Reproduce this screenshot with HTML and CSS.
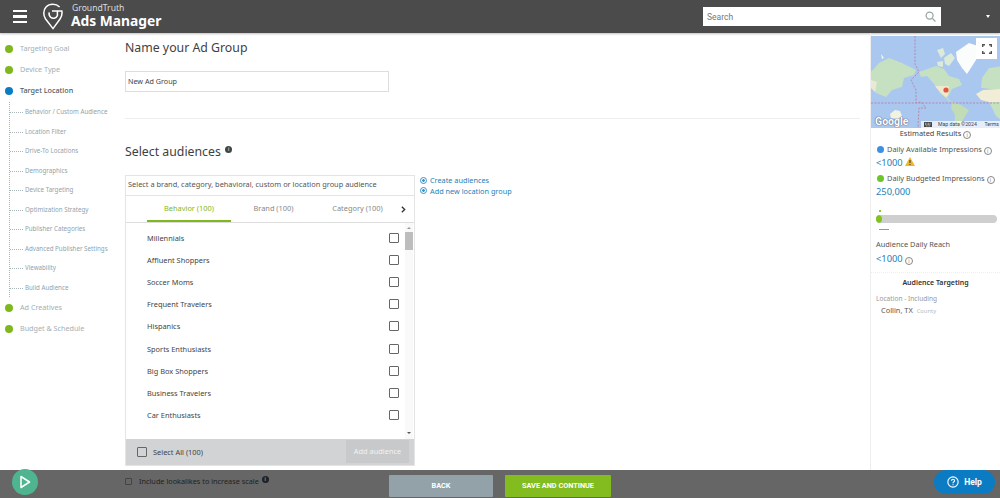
FILE: index.html
```html
<!doctype html>
<html lang="en">
  <head>
    <meta charset="UTF-8" />
    <title>Ads Manager</title>
    <link rel="stylesheet" href="styles.css">
  </head>
  <body>
    <header class="topbar">
      <div class="burger"><span></span><span></span><span></span></div>
      <svg class="logo" width="20" height="27" viewBox="0 0 20 27" fill="none" stroke="#fff" stroke-width="1.5">
        <path d="M16.6 4 C13 .4 6.4 .4 3 4 C0 7.4 .2 12.4 2.6 16 L10 25.6 L17 16 C19 12.8 19.4 10.4 18.8 8 H9" />
        <path d="M14.4 8 V12.6 C13 15.4 9.8 16 7.8 14.4 C6.4 13.2 5.8 11.2 6.2 9.4" />
      </svg>
      <div class="brand">
        <span class="brand-top">GroundTruth</span>
        <span class="brand-name">Ads Manager</span>
      </div>
      <div class="search">
        <span>Search</span>
        <svg width="11" height="11" viewBox="0 0 12 12" fill="none" stroke="#9aa5a8" stroke-width="1.4">
          <circle cx="5" cy="5" r="3.8" />
          <path d="M8 8 L11.4 11.4" />
        </svg>
      </div>
      <div class="caret"></div>
    </header>

    <div class="layout">
      <nav class="steps">
        <div class="step done">Targeting Goal</div>
        <div class="step done">Device Type</div>
        <div class="step active">Target Location</div>
        <ul class="substeps">
          <li>Behavior / Custom Audience</li>
          <li>Location Filter</li>
          <li>Drive-To Locations</li>
          <li>Demographics</li>
          <li>Device Targeting</li>
          <li>Optimization Strategy</li>
          <li>Publisher Categories</li>
          <li>Advanced Publisher Settings</li>
          <li>Viewability</li>
          <li>Build Audience</li>
        </ul>
        <div class="step done">Ad Creatives</div>
        <div class="step done">Budget &amp; Schedule</div>
      </nav>

      <main class="content">
        <h2 class="title">Name your Ad Group</h2>
        <div class="name-input">New Ad Group</div>
        <hr class="divider" />
        <h2 class="title audiences-title">Select audiences <i class="info-solid">i</i></h2>

        <div class="audience-row">
          <section class="picker">
            <div class="picker-search">Select a brand, category, behavioral, custom or location group audience</div>
            <div class="tabs">
              <span class="tab selected">Behavior (100)</span>
              <span class="tab">Brand (100)</span>
              <span class="tab">Category (100)</span>
              <svg class="tab-next" width="5" height="7" viewBox="0 0 6 8" fill="none" stroke="#333" stroke-width="1.6"><path d="M1 .8 L4.4 4 L1 7.2" /></svg>
            </div>
            <div class="list-wrap">
              <ul class="list">
                <li>Millennials<b></b></li>
                <li>Affluent Shoppers<b></b></li>
                <li>Soccer Moms<b></b></li>
                <li>Frequent Travelers<b></b></li>
                <li>Hispanics<b></b></li>
                <li>Sports Enthusiasts<b></b></li>
                <li>Big Box Shoppers<b></b></li>
                <li>Business Travelers<b></b></li>
                <li>Car Enthusiasts<b></b></li>
              </ul>
              <div class="scrollbar"><div class="thumb"></div></div>
            </div>
            <div class="picker-foot">
              <b></b>
              <span class="select-all">Select All (100)</span>
              <span class="add-btn">Add audience</span>
            </div>
          </section>
          <div class="links">
            <a><i class="ring"></i>Create audiences</a>
            <a><i class="ring"></i>Add new location group</a>
          </div>
        </div>
      </main>

      <aside class="results">
        <div class="map">
          <svg width="130" height="92" viewBox="0 0 130 92">
            <rect width="130" height="92" fill="#a9c7ef" />
            <g class="land">
              <!-- asia -->
              <path d="M0 36 L8 27 L18 22 L31 27 L45 34 L43 39 L33 42 L31 51 L21 54 L15 61 L5 57 L0 51 Z" fill="#c6e0c2" />
              <path d="M0 44 L6 46 L4 56 L0 52 Z" fill="#e9ead4" />
              <path d="M10 18 L13 22 L11 23 Z" fill="#f2f5f2" />
              <!-- australia -->
              <path d="M19 78 L24 74 L29 75 L31 80 L27 83 L20 82 Z" fill="#f1f2e0" />
              <!-- north america -->
              <path d="M48 36 L65 30 L73 33 L78 40 L88 43 L91 49 L81 53 L78 59 L76 62 L81 66 L78 65 L69 57 L63 48 L56 40 L50 41 Z" fill="#c6e0c2" />
              <path d="M64 50 L78 50 L77 59 L75 61 L70 57 Z" fill="#efe9cf" />
              <path d="M66 14 L72 12 L74 18 L70 22 Z M73 22 L80 17 L84 22 L78 30 L74 28 Z M66 26 L72 25 L72 31 L67 30 Z" fill="#dcebd9" />
              <!-- greenland -->
              <path d="M85 16 L98 7 L110 11 L105 24 L96 38 L91 32 L86 24 Z" fill="#fbfcfc" />
              <!-- south america -->
              <path d="M81 66 L90 69 L98 74 L93 82 L88 91 L83 91 L84 79 L80 72 Z" fill="#c2dcb6" />
              <!-- europe and africa -->
              <path d="M111 42 L118 32 L126 31 L130 30 L130 54 L110 52 Z" fill="#c6e0c2" />
              <path d="M105 58 L112 54 L130 53 L130 66 L118 66 L110 64 Z" fill="#f2edd6" />
              <path d="M118 66 L130 66 L130 84 L125 80 Z" fill="#c6e0c2" />
            </g>
            <path d="M44 0 V28 L48 36 L40 44 L45 54 V67 L50 66 L55 72 L48 72 L47 92 M0 67 H130" fill="none" stroke="#b77a9c" stroke-width=".8" stroke-dasharray="2 1.4" />
            <circle cx="75" cy="54" r="2.6" fill="#e2583e" />
          </svg>
          <span class="google">Google</span>
          <div class="attrib">
            <svg width="8" height="5" viewBox="0 0 8 5"><rect width="8" height="5" rx=".5" fill="#444" /><path d="M1 1.3 H7 M1 2.6 H7 M2 3.9 H6" stroke="#fff" stroke-width=".6" stroke-dasharray="1 .5" /></svg>
            <span class="attrib-data">Map data ©2024</span>
            <span>Terms</span>
          </div>
          <div class="fullscreen">
            <svg width="10" height="10" viewBox="0 0 10 10" fill="none" stroke="#555" stroke-width="1.4">
              <path d="M.7 3 V.7 H3 M7 .7 H9.3 V3 M9.3 7 V9.3 H7 M3 9.3 H.7 V7" />
            </svg>
          </div>
        </div>
        <div class="est-title">Estimated Results <i class="info-ring">i</i></div>
        <div class="stat-label"><i class="dot blue"></i>Daily Available Impressions <i class="info-ring">i</i></div>
        <div class="stat-value">&lt;1000
          <svg width="10" height="9" viewBox="0 0 10 9"><path d="M5 0 L10 9 H0 Z" fill="#f0b429" /><path d="M5 3 V6 M5 7 V8" stroke="#333" stroke-width="1" /></svg>
        </div>
        <div class="stat-label second"><i class="dot green"></i>Daily Budgeted Impressions <i class="info-ring">i</i></div>
        <div class="stat-value">250,000</div>
        <div class="tick"></div>
        <div class="meter"><div class="meter-fill"></div></div>
        <div class="mini"></div>
        <div class="reach-label">Audience Daily Reach</div>
        <div class="stat-value">&lt;1000 <i class="info-ring">i</i></div>
        <hr class="dotted" />
        <div class="target-title">Audience Targeting</div>
        <div class="loc-label">Location - Including</div>
        <div class="loc-item">Collin, TX <span>County</span></div>
      </aside>
    </div>

    <footer class="bottombar">
      <div class="play">
        <svg width="12" height="14" viewBox="0 0 12 14" fill="none" stroke="#fff" stroke-width="1.5" stroke-linejoin="round"><path d="M2 1.5 L10.5 7 L2 12.5 Z" /></svg>
      </div>
      <div class="lookalike"><b></b>Include lookalikes to increase scale <i class="info-solid dark">i</i></div>
      <div class="actions">
        <span class="btn back">BACK</span>
        <span class="btn save">SAVE AND CONTINUE</span>
      </div>
      <div class="help">
        <svg width="12" height="12" viewBox="0 0 14 14" fill="none" stroke="#fff" stroke-width="1.3"><circle cx="7" cy="7" r="6" /><path d="M5.2 5.5 C5.2 3.4 8.8 3.4 8.8 5.4 C8.8 6.8 7 6.8 7 8.4 M7 9.6 V10.8" /></svg>
        Help
      </div>
    </footer>
  </body>
</html>
```

FILE: styles.css
```css
* {
  box-sizing: border-box;
}
html,
body {
  height: 100%;
}
body {
  margin: 0;
  height: 498px;
  overflow: hidden;
  display: flex;
  flex-direction: column;
  font-family: "Noto Sans", Arial, sans-serif;
  background-color: #fff;
  color: #444;
}
i {
  font-style: normal;
}

/* top bar */
.topbar {
  height: 33px;
  flex: none;
  display: flex;
  align-items: center;
  background-color: #4b4b4b;
  box-shadow: 0 1px 2px rgba(0, 0, 0, 0.25);
  color: #fff;
}
.burger {
  width: 14px;
  margin-left: 13px;
  display: flex;
  flex-direction: column;
  gap: 3px;
}
.burger span {
  height: 2.5px;
  background-color: #fff;
}
.logo {
  margin-left: 16px;
}
.brand {
  margin: 0 0 2px 8px;
  display: flex;
  flex-direction: column;
  line-height: 1;
}
.brand-top {
  height: 10px;
  font-size: 8.6px;
  line-height: 10px;
  color: #ddd;
  margin-left: 1px;
}
.brand-name {
  height: 15px;
  font-size: 13.8px;
  font-weight: 700;
  line-height: 15px;
}
.search {
  margin-left: auto;
  width: 238px;
  height: 19px;
  padding: 0 4px 0 4px;
  display: flex;
  align-items: center;
  justify-content: space-between;
  background-color: #fff;
  color: #777;
  font-size: 8.5px;
  font-family: Roboto, Arial, sans-serif;
}
.search svg {
  margin-right: 1px;
}
.caret {
  width: 0;
  height: 0;
  margin: 0 10px 0 45px;
  border-left: 2.5px solid transparent;
  border-right: 2.5px solid transparent;
  border-top: 3px solid #fff;
}

/* page */
.layout {
  flex: 1;
  display: flex;
  min-height: 0;
}

/* left steps */
.steps {
  width: 125px;
  flex: none;
  padding: 5px 0 0 5px;
}
.step {
  position: relative;
  height: 21px;
  padding-left: 15px;
  font-size: 7.2px;
  line-height: 21px;
  color: #a3afb3;
  white-space: nowrap;
}
.step::before {
  content: "";
  position: absolute;
  left: 0;
  top: 6.5px;
  width: 8px;
  height: 8px;
  border-radius: 50%;
}
.step.done::before {
  background-color: #7fb81d;
}
.step.active::before {
  background-color: #0b7cc4;
}
.step.active {
  color: #4d5c63;
  font-weight: 500;
}
.substeps {
  list-style: none;
  margin: 1px 0 0 4px;
  padding: 0;
  border-left: 1px dotted #a9b4b8;
  height: 195px;
}
.substeps li {
  position: relative;
  height: 19.55px;
  padding-left: 15px;
  font-size: 6.2px;
  line-height: 19.5px;
  color: #8fa3ad;
  white-space: nowrap;
}
.substeps li::before {
  content: "";
  position: absolute;
  left: 0;
  top: 10px;
  width: 13px;
  border-top: 1px dotted #a9b4b8;
}

/* middle */
.content {
  flex: 1;
  min-width: 0;
}
.title {
  margin: 7px 0 0;
  font-size: 12.3px;
  line-height: 16px;
  font-weight: 400;
  color: #3f3f3f;
}
.name-input {
  width: 264px;
  height: 21px;
  margin-top: 15px;
  padding-left: 2px;
  border: 1px solid #ddd;
  font-size: 7.2px;
  line-height: 19px;
  color: #444;
}
.divider {
  width: 735px;
  margin: 26px 0 0;
  border: 0;
  border-top: 1px solid #eee;
}
.audiences-title {
  margin-top: 25px;
}
.info-solid {
  display: inline-block;
  width: 7px;
  height: 7px;
  border-radius: 50%;
  background-color: #444;
  color: #fff;
  font-size: 5px;
  line-height: 7px;
  text-align: center;
  vertical-align: 5px;
  margin-left: 1px;
}
.audience-row {
  display: flex;
  margin-top: 15px;
}
.picker {
  width: 290px;
  height: 291px;
  flex: none;
  border: 1px solid #e4e4e4;
  display: flex;
  flex-direction: column;
}
.picker-search {
  height: 20px;
  flex: none;
  padding-left: 2px;
  border-bottom: 1px solid #e4e4e4;
  font-size: 7.4px;
  line-height: 17px;
  color: #555;
  white-space: nowrap;
}
.tabs {
  height: 27px;
  flex: none;
  display: flex;
  align-items: center;
  border-bottom: 1px solid #ddd;
  font-size: 7.4px;
  color: #888;
}
.tab {
  height: 26px;
  line-height: 24px;
  text-align: center;
  white-space: nowrap;
}
.tab:nth-child(1) {
  width: 84px;
  margin-left: 21px;
}
.tab:nth-child(2) {
  width: 85px;
}
.tab:nth-child(3) {
  width: 83px;
}
.tab.selected {
  color: #7fb81d;
  border-bottom: 2px solid #7fb81d;
}
.tab-next {
  margin-left: 2px;
}
.list-wrap {
  flex: 1;
  display: flex;
  min-height: 0;
}
.list {
  flex: 1;
  list-style: none;
  margin: 0;
  padding: 4px 0 0 21px;
}
.list li {
  height: 22.1px;
  display: flex;
  align-items: center;
  justify-content: space-between;
  padding-right: 6px;
  font-size: 7.4px;
  color: #444;
}
.list b,
.picker-foot b {
  width: 10px;
  height: 10px;
  border: 1px solid #666;
  border-radius: 1px;
  display: block;
}
.scrollbar {
  width: 8px;
  margin-right: 1px;
  display: flex;
  flex-direction: column;
  align-items: center;
  background-color: #f9f9f9;
}
.scrollbar::before,
.scrollbar::after {
  content: "";
  width: 0;
  height: 0;
  border-left: 2px solid transparent;
  border-right: 2px solid transparent;
}
.scrollbar::before {
  margin: 4px 0 3px;
  border-bottom: 2px solid #999;
}
.scrollbar::after {
  margin: auto 0 5px;
  border-top: 2px solid #555;
}
.thumb {
  width: 8px;
  height: 18px;
  background-color: #bdbdbd;
}
.picker-foot {
  height: 26px;
  flex: none;
  display: flex;
  align-items: center;
  padding: 0 5px 1px 11px;
  background-color: #d2d3d5;
  font-size: 7.4px;
  color: #444;
}
.select-all {
  margin-left: 6px;
}
.add-btn {
  margin-left: auto;
  width: 63px;
  height: 23px;
  background-color: #c8c9cb;
  color: #f2f2f2;
  line-height: 23px;
  text-align: center;
}
.links {
  margin: 0 0 0 5px;
  display: flex;
  flex-direction: column;
  font-size: 7.3px;
  line-height: 10.5px;
  color: #1b7fb8;
}
.links a {
  display: flex;
  align-items: center;
  white-space: nowrap;
}
.ring {
  width: 7px;
  height: 7px;
  margin-right: 3px;
  border: 1px solid #3d93c4;
  border-radius: 50%;
  background: radial-gradient(#3d93c4 30%, #fff 45%);
}

/* right results */
.results {
  width: 130px;
  flex: none;
  padding-top: 3px;
  border-left: 1px solid #eee;
  font-size: 7.4px;
}
.map {
  position: relative;
  height: 92px;
  overflow: hidden;
}
.map > svg {
  display: block;
}
.land {
  filter: blur(0.5px);
}
.fullscreen {
  position: absolute;
  top: 2px;
  right: 3px;
  width: 21px;
  height: 21px;
  background-color: #fff;
  display: flex;
  align-items: center;
  justify-content: center;
}
.google {
  position: absolute;
  left: 4px;
  bottom: 0;
  font-family: Roboto, Arial, sans-serif;
  font-size: 10.5px;
  font-weight: 700;
  color: #fff;
  text-shadow: 0 0 1px #556, 0 0 1px #556;
}
.attrib {
  position: absolute;
  right: 0;
  bottom: 0;
  width: 79px;
  height: 7px;
  display: flex;
  align-items: center;
  padding: 0 1px 0 3px;
  background-color: rgba(255, 255, 255, 0.7);
  font-family: Roboto, Arial, sans-serif;
  font-size: 5.2px;
  line-height: 7px;
  color: #444;
}
.attrib-data {
  margin: 0 auto 0 6px;
}
.est-title {
  margin-top: 1px;
  text-align: center;
  line-height: 9px;
  color: #444;
}
.info-ring {
  display: inline-block;
  width: 8px;
  height: 8px;
  border: 1px solid #888;
  border-radius: 50%;
  color: #777;
  font-size: 5px;
  line-height: 6px;
  text-align: center;
  vertical-align: -1px;
}
.stat-label {
  margin: 5px 0 0 6px;
  line-height: 10px;
  color: #555;
  white-space: nowrap;
}
.stat-label.second {
  margin-top: 4px;
}
.dot {
  display: inline-block;
  width: 7px;
  height: 7px;
  border-radius: 50%;
  margin-right: 3px;
  vertical-align: -1px;
}
.dot.blue {
  background-color: #3f8fe0;
}
.dot.green {
  background-color: #6cc52b;
}
.stat-value {
  margin: 1px 0 0 5px;
  font-size: 9.3px;
  line-height: 13px;
  color: #1b7fb8;
  white-space: nowrap;
}
.tick {
  width: 2px;
  height: 2px;
  margin: 12px 0 0 8px;
  background-color: #8cc63f;
}
.meter {
  width: 121px;
  height: 8px;
  margin: 3px 0 0 5px;
  border-radius: 4px;
  background-color: #cfcfcf;
  overflow: hidden;
}
.meter-fill {
  width: 6px;
  height: 8px;
  border-radius: 0 4px 4px 0;
  background-color: #7fc31c;
}
.mini {
  width: 10px;
  height: 1px;
  margin: 6px 0 0 8px;
  background-color: #6a9fd8;
}
.reach-label {
  margin: 9px 0 2px 5px;
  font-size: 7.4px;
  line-height: 11px;
  color: #555;
}
.dotted {
  margin: 7px 0 0;
  border: 0;
  border-top: 1px dotted #eee;
}
.target-title {
  margin-top: 5px;
  text-align: center;
  font-size: 7px;
  font-weight: 600;
  line-height: 10px;
  color: #333;
}
.loc-label {
  margin: 6px 0 0 5px;
  font-size: 6.6px;
  line-height: 9px;
  color: #999;
}
.loc-item {
  margin: 2px 0 0 10px;
  font-size: 7.4px;
  line-height: 10px;
  color: #555;
}
.loc-item span {
  margin-left: 2px;
  font-size: 5.8px;
  color: #b5bdc0;
}

/* bottom bar */
.bottombar {
  position: relative;
  height: 28px;
  flex: none;
  display: flex;
  align-items: center;
  background-color: #666;
  color: #222;
}
.play {
  position: absolute;
  left: 12px;
  top: -1px;
  width: 26px;
  height: 26px;
  border-radius: 50%;
  background-color: #4fb591;
  display: flex;
  align-items: center;
  justify-content: center;
}
.lookalike {
  position: absolute;
  left: 125px;
  top: 5px;
  display: flex;
  align-items: center;
  font-size: 7.3px;
  line-height: 12px;
  white-space: nowrap;
}
.lookalike b {
  width: 7px;
  height: 7px;
  margin-right: 7px;
  border: 1px solid #444;
  border-radius: 1px;
}
.info-solid.dark {
  margin: -3px 0 0 3px;
  background-color: #222;
  color: #ddd;
  vertical-align: 0;
}
.actions {
  margin: 4px 0 0 389px;
  display: flex;
  gap: 12px;
}
.btn {
  height: 22px;
  border-radius: 1px;
  color: #fff;
  font-family: Roboto, Arial, sans-serif;
  font-size: 7.3px;
  font-weight: 700;
  line-height: 22px;
  text-align: center;
}
.back {
  width: 104px;
  background-color: #93a1a8;
}
.save {
  width: 106px;
  background-color: #82bc1e;
}
.help {
  position: absolute;
  left: 934px;
  top: 0;
  width: 61px;
  height: 24px;
  border-radius: 12px;
  background-color: #0b7cc4;
  color: #fff;
  display: flex;
  align-items: center;
  justify-content: center;
  gap: 5px;
  font-family: Roboto, Arial, sans-serif;
  font-size: 8.5px;
  font-weight: 700;
}
```
